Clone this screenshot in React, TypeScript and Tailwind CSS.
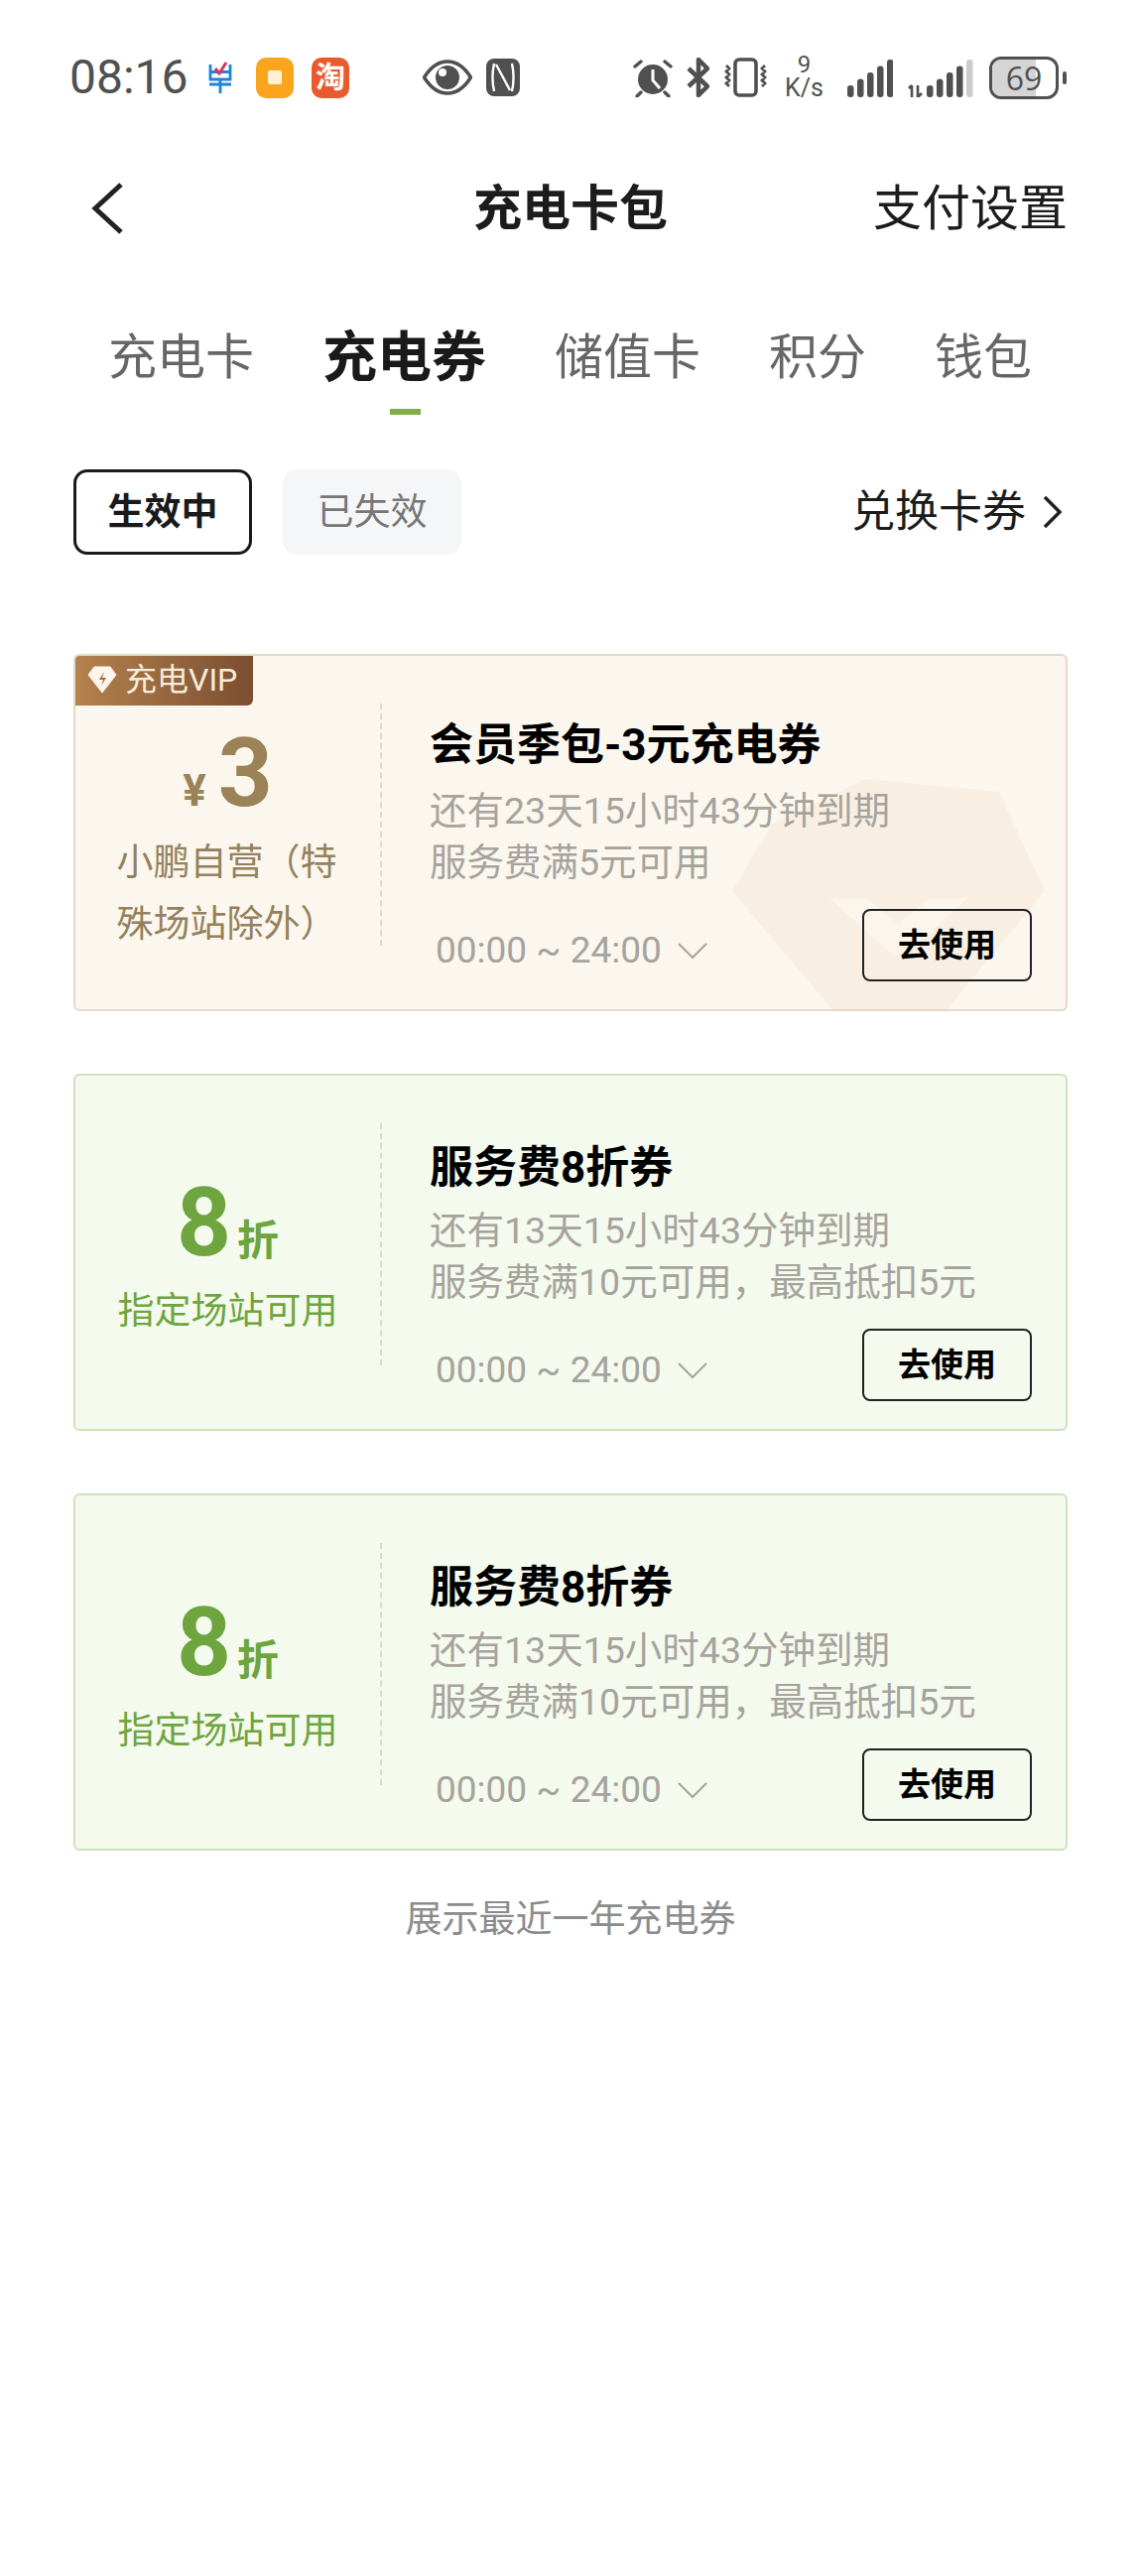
import React from "react";

const Bars = ({ n }: { n: number }) => (
  <svg width="46" height="40" viewBox="0 0 46 40">
    {[0, 1, 2, 3, 4].map((i) => {
      const h = 12 + i * 6.5;
      return <rect key={i} x={i * 10} y={40 - h} width="6.5" height={h} rx="3" fill={i < n ? "#505050" : "#ccc"} />;
    })}
  </svg>
);

function StatusBar() {
  return (
    <div className="flex h-[60px] items-center pl-[70px] text-[#505050]">
      <span className="w-[122px] text-[48px] leading-none font-['Roboto',sans-serif]">08:16</span>
      <svg className="ml-[18px]" width="24" height="34" viewBox="0 0 24 34" fill="none">
        <path d="M2 4v15h20V4M1 24h22M12 19v14M2 11.5h20" stroke="#1f83d8" strokeWidth="2.8" />
        <path d="M7 8l4 5 7-11" stroke="#e0345c" strokeWidth="3" />
      </svg>
      <div className="ml-[24px] flex h-[41px] w-[38px] items-center justify-center rounded-[10px] bg-[#fba51f]">
        <div className="h-[14px] w-[14px] rounded-[2px] bg-[#fff1d6]" />
      </div>
      <div className="ml-[18px] flex h-[41px] w-[38px] items-center justify-center rounded-[10px] bg-[#ea5a2c] text-[30px] leading-none font-bold text-white">
        淘
      </div>
      <svg className="ml-[74px]" width="50" height="36" viewBox="0 0 50 36">
        <path d="M1.5 18C9 6 17 2 25 2s16 4 23.500 16C41 30 33 34 25 34S9 30 1.500 18z" fill="none" stroke="#505050" strokeWidth="3.6" />
        <circle cx="25" cy="18" r="12" fill="#505050" />
        <circle cx="20" cy="13" r="4" fill="#fff" />
      </svg>
      <svg className="ml-[14px]" width="34" height="38" viewBox="0 0 34 38">
        <rect width="34" height="38" rx="8" fill="#505050" />
        <path d="M8 5c-2 9-2 19 0 28M26 5c2 9 2 19 0 28M10 6l14 26" fill="none" stroke="#fff" strokeWidth="2.4" />
      </svg>
      <svg className="ml-[114px]" width="40" height="40" viewBox="0 0 40 40">
        <circle cx="20" cy="22" r="15" fill="#505050" />
        <path d="M20 12v11l7 8" fill="none" stroke="#fff" strokeWidth="3" />
        <path d="M2 9l6-5M38 9l-6-5M8 35l-4 4M32 35l4 4" stroke="#505050" strokeWidth="3.4" strokeLinecap="round" />
      </svg>
      <svg className="ml-[14px]" width="23" height="40" viewBox="0 0 23 40" fill="none">
        <path d="M2 29L21 11 12 2v36l9-9L2 11" stroke="#505050" strokeWidth="4.5" strokeLinejoin="round" />
      </svg>
      <svg className="ml-[14px]" width="45" height="40" viewBox="0 0 45 40" fill="none">
        <rect x="12" y="2" width="21" height="36" rx="4" stroke="#505050" strokeWidth="3.6" />
        <path d="M3 8l3 3-3 3 3 3-3 3 3 3-3 3 3 3M42 8l-3 3 3 3-3 3 3 3-3 3 3 3-3 3" stroke="#505050" strokeWidth="2.8" />
      </svg>
      <div className="ml-[18px] flex w-[37px] flex-col items-center text-center leading-none font-['Roboto',sans-serif] text-[#505050]">
        <span className="text-[24px] leading-[21px]">9</span>
        <span className="text-[25px] leading-[25px]">K/s</span>
      </div>
      <div className="ml-[25px]">
        <Bars n={5} />
      </div>
      <svg className="ml-[15px]" width="66" height="40" viewBox="0 0 66 40">
        <path d="M4 28v12M1 31l3-3M10 28v12l4-4" stroke="#505050" strokeWidth="2.6" fill="none" />
        {[0, 1, 2, 3, 4].map((i) => {
          const h = 12 + i * 6.5;
          return <rect key={i} x={19 + i * 10} y={40 - h} width="6.5" height={h} rx="3" fill={i < 4 ? "#505050" : "#ccc"} />;
        })}
      </svg>
      <div className="relative ml-[16px] flex h-[43px] w-[70px] items-center justify-center rounded-[12px] border-[3px] border-[#505050] text-[32px] leading-[37px] font-medium text-[#505050] font-['Open_Sans',sans-serif]">
        <div className="absolute inset-y-0 left-0 w-[69%] rounded-l-[9px] bg-[#d5d5d5]" />
        <span className="relative">69</span>
      </div>
      <div className="ml-[4px] h-[13px] w-[4px] rounded-full bg-[#505050]" />
    </div>
  );
}

function Coupon({
  variant,
  title,
  line1,
  line2,
  children,
}: {
  variant: "gold" | "green";
  title: string;
  line1: string;
  line2: string;
  children: React.ReactNode;
}) {
  const gold = variant === "gold";
  return (
    <div
      className={
        gold
          ? "relative flex h-[360px] overflow-hidden rounded-[6px] border-2 border-[#e3dac9] bg-[#fbf7ee]"
          : "relative flex h-[360px] overflow-hidden rounded-[6px] border-2 border-[#cfe2bb] bg-[#f4faee]"
      }
    >
      {gold && (
        <>
          <svg className="absolute top-[124px] left-[662px]" width="320" height="236" viewBox="0 0 320 236">
            <path d="M0 113L40 45 135 0l134 13 46 100-100 121H102z" fill="#f8efe2" />
            <path d="M98 120l62 56 15 2 62-58-38 0-32 26-32-26z" fill="#fbf5ec" />
          </svg>
          <div className="absolute top-[-2px] left-[-2px] flex h-[52px] w-[181px] items-center gap-[8px] rounded-br-[6px] bg-gradient-to-r from-[#b5834f] to-[#7b4e30] pl-[14px] text-[32px] leading-none text-[#f7ecdf]">
            <svg width="30" height="28" viewBox="0 0 30 28" className="shrink-0">
              <path d="M7 1h16l6 8-14 18L1 9z" fill="#fdf6ec" stroke="#fdf6ec" strokeLinejoin="round" />
              <path d="M17 6l-5 8h4l-2 6 5-8h-4z" fill="#9a6c42" />
            </svg>
            <span>充电VIP</span>
          </div>
        </>
      )}
      <div className="relative flex w-[307px] shrink-0 flex-col items-center">{children}</div>
      <div
        className={
          gold
            ? "relative mt-[48px] h-[244px] w-0 border-l-2 border-dashed border-[#e2d9c7]"
            : "relative mt-[48px] h-[244px] w-0 border-l-2 border-dashed border-[#d3e0c4]"
        }
      />
      <div className={gold ? "relative flex min-w-0 flex-1 flex-col pt-[60px] pr-[34px] pl-[48px]" : "relative flex min-w-0 flex-1 flex-col pt-[63px] pr-[34px] pl-[48px]"}>
        <div className="text-[44px] leading-[60px] font-bold whitespace-nowrap text-black">{title}</div>
        <div className={gold ? "mt-[10px] text-[37.500px] leading-[52px] whitespace-nowrap text-[#a6a39d]" : "mt-[7px] text-[37.500px] leading-[52px] whitespace-nowrap text-[#a6a39d]"}>
          <div>{line1}</div>
          <div>{line2}</div>
        </div>
        <div className="mt-[21px] flex items-center justify-between">
          <div className="mt-[10px] flex items-center pl-[6px] text-[37px] leading-none text-[#a6a39d]">
            <span>00:00 ~ 24:00</span>
            <svg className="ml-[15px]" width="32" height="20" viewBox="0 0 32 20" fill="none">
              <path d="M2 3l14 14L30 3" stroke="#a6a39d" strokeWidth="2" />
            </svg>
          </div>
          <div className="flex h-[73px] w-[171px] items-center justify-center rounded-[8px] border-2 border-[#222] text-[33px] leading-none font-bold text-black">
            去使用
          </div>
        </div>
      </div>
    </div>
  );
}

const GreenLeft = () => (
  <>
    <div className="mt-[98px] flex items-baseline text-[#6ea53f]">
      <span className="text-[96px] leading-[100px] font-bold">8</span>
      <span className="ml-[6px] text-[42px] leading-none font-bold">折</span>
    </div>
    <div className="mt-[14px] text-[37px] leading-[52px] text-[#6ea53f]">指定场站可用</div>
  </>
);

export default function App() {
  return (
    <div className="min-h-[2596px] w-[1150px] bg-white pt-[48px] font-['Roboto','Noto_Sans_CJK_SC',sans-serif]">
      <StatusBar />
      <div className="relative mt-[52px] flex h-[100px] items-center justify-between pr-[74px] pl-[88px]">
        <svg width="40" height="56" viewBox="0 0 40 56" fill="none">
          <path d="M34 4L8 28l26 24" stroke="#222" strokeWidth="5" />
        </svg>
        <span className="absolute left-0 w-full text-center text-[49px] leading-none font-bold text-[#1c1c1c]">充电卡包</span>
        <span className="text-[49px] leading-none text-[#1c1c1c]">支付设置</span>
      </div>
      <div className="mt-[57px] flex h-[86px] items-center gap-[69px] pl-[109px] text-[49px] leading-none text-[#666]">
        <span>充电卡</span>
        <div className="relative">
          <span className="text-[55px] font-bold text-[#1a1a1a]">充电券</span>
          <div className="absolute top-[79px] left-[68px] h-[6px] w-[31px] bg-[#7fae4a]" />
        </div>
        <span>储值卡</span>
        <span>积分</span>
        <span>钱包</span>
      </div>
      <div className="mt-[70px] flex h-[86px] items-center pr-[78px] pl-[74px]">
        <div className="flex h-[86px] w-[180px] items-center justify-center rounded-[14px] border-[3px] border-[#1a1a1a] text-[37px] leading-none font-bold text-[#1a1a1a]">
          生效中
        </div>
        <div className="ml-[31px] flex h-[86px] w-[180px] items-center justify-center rounded-[14px] bg-[#f5f6f8] text-[37px] leading-none text-[#777]">
          已失效
        </div>
        <div className="ml-auto flex items-center text-[44px] leading-none text-[#1c1c1c]">
          <span>兑换卡券</span>
          <svg className="ml-[16px]" width="22" height="36" viewBox="0 0 22 36" fill="none">
            <path d="M3 3l15 15L3 33" stroke="#222" strokeWidth="3.5" />
          </svg>
        </div>
      </div>
      <div className="mt-[100px] flex flex-col gap-[63px] px-[74px]">
        <Coupon variant="gold" title="会员季包-3元充电券" line1="还有23天15小时43分钟到期" line2="服务费满5元可用">
          <div className="mt-[66px] flex items-baseline text-[#9c8257]">
            <span className="text-[44px] leading-none font-bold">¥</span>
            <span className="ml-[12px] text-[96px] leading-[104px] font-bold">3</span>
          </div>
          <div className="mt-[8px] w-[224px] text-[37px] leading-[62px] text-[#94815c]">小鹏自营（特殊场站除外）</div>
        </Coupon>
        <Coupon variant="green" title="服务费8折券" line1="还有13天15小时43分钟到期" line2="服务费满10元可用，最高抵扣5元">
          <GreenLeft />
        </Coupon>
        <Coupon variant="green" title="服务费8折券" line1="还有13天15小时43分钟到期" line2="服务费满10元可用，最高抵扣5元">
          <GreenLeft />
        </Coupon>
      </div>
      <div className="mt-[45px] text-center text-[37px] leading-[50px] text-[#8c8c8c]">展示最近一年充电券</div>
    </div>
  );
}
